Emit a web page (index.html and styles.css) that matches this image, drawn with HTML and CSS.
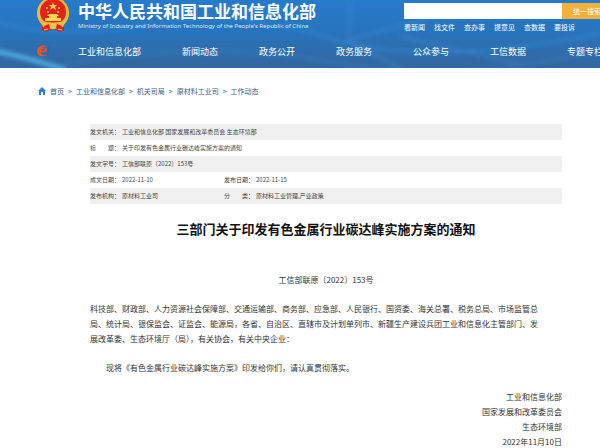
FILE: index.html
```html
<!DOCTYPE html>
<html lang="zh-CN">
<head>
<meta charset="utf-8">
<title>三部门关于印发有色金属行业碳达峰实施方案的通知</title>
<link rel="stylesheet" href="styles.css">
</head>
<body>
<header class="site-header">
  <svg class="backdrop" viewBox="0 0 600 68" preserveAspectRatio="none" aria-hidden="true">
    <defs>
      <linearGradient id="sky" x1="0" y1="0" x2="0" y2="1">
        <stop offset="0" stop-color="#277bcb"/>
        <stop offset=".45" stop-color="#2874bd"/>
        <stop offset="1" stop-color="#34669f"/>
      </linearGradient>
      <filter id="soft" x="-20%" y="-50%" width="140%" height="200%"><feGaussianBlur stdDeviation="2"/></filter>
    </defs>
    <rect width="600" height="68" fill="url(#sky)"/>
    <g fill="none" filter="url(#soft)">
      <path d="M-5 51 Q30 58 65 70" stroke="#55b8ee" stroke-width="4"/>
      <path d="M-5 22 Q60 40 150 24 T330 38 T600 34" stroke="#3186d2" stroke-width="3" opacity=".7"/>
      <path d="M60 66 Q200 38 330 62 T600 50" stroke="#3c83c6" stroke-width="2" opacity=".6"/>
      <path d="M350 0 L348 40 L400 68 M348 40 L460 10 M400 36 L520 64" stroke="#3d8fd9" stroke-width="2" opacity=".6"/>
    </g>
  </svg>
  <div class="masthead">
    <svg class="emblem" viewBox="0 0 34 34" role="img" aria-label="国徽">
      <path d="M6 22 L6 31 Q10 34 13 31 L17 30 L21 31 Q24 34 28 31 L28 22Z" fill="#d9241c"/>
      <circle cx="17" cy="14" r="16" fill="#f2b93b"/>
      <circle cx="17" cy="13" r="13" fill="#e32219"/>
      <path d="M17 3l1 3h3l-2 2 1 3-3-2-3 2 1-3-2-2h3z" fill="#ffd34b"/>
      <g fill="#ffd34b"><circle cx="11" cy="9" r="1"/><circle cx="23" cy="9" r="1"/><circle cx="12" cy="13" r="1"/><circle cx="22" cy="13" r="1"/>
      <path d="M13 15h8l2 2H11zM13 17h8v2h-8zM9 19h16v3H9z"/></g>
      <path d="M4 21 Q17 26 30 21 L27 28 Q17 30 7 28Z" fill="#f2b93b"/>
      <path d="M8 27l5-2 1 4-4 2zM26 27l-5-2-1 4 4 2z" fill="#d9241c"/>
      <circle cx="17" cy="27" r="3" fill="#f6c84f"/>
      <path d="M8 31l4-1M22 30l4 1" stroke="#f6c84f" stroke-width="1"/>
    </svg>
    <div class="brand">
      <div class="brand-cn">中华人民共和国工业和信息化部</div>
      <div class="brand-en">Ministry of Industry and Information Technology of the People's Republic of China</div>
    </div>
    <div class="tools">
      <form class="search">
        <input type="search" aria-label="搜索">
        <button type="button">统一搜索</button>
      </form>
      <div class="quick"><a href="#">看新闻</a><a href="#">找文件</a><a href="#">查办事</a><a href="#">提意见</a><a href="#">查数据</a><a href="#">要投诉</a></div>
    </div>
  </div>
  <nav class="main-nav">
    <svg class="mark" viewBox="0 0 14 12" aria-hidden="true">
      <path d="M10 1C5-1 0 2 0 6.500C0 11 5 13 10 10C6 11 3 9 4 7C8 8 11 6 10 4C9 2 6 2 4 4C5 2 8 1 10 1ZM4 6C5 4 7 3 8 4C8 5 6 6 4 6Z" fill="#e6532c"/>
      <path d="M11 2Q14 4 11 7" fill="none" stroke="#255f9d"/>
    </svg>
    <a href="#">工业和信息化部</a><a href="#">新闻动态</a><a href="#">政务公开</a><a href="#">政务服务</a><a href="#">公众参与</a><a href="#">工信数据</a><a href="#">专题专栏</a>
  </nav>
</header>
<nav class="crumbs">
  <svg viewBox="0 0 8 8" aria-hidden="true"><path d="M4 0L8 4H7V8H5V5H3V8H1V4H0Z" fill="#2f80d0"/></svg>
  <a href="#">首页</a><span>&gt;</span><a href="#">工业和信息化部</a><span>&gt;</span><a href="#">机关司局</a><span>&gt;</span><a href="#">原材料工业司</a><span>&gt;</span><a href="#">工作动态</a>
</nav>
<main>
  <table class="meta">
    <tr><th>发文机关：</th><td colspan="3">工业和信息化部 国家发展和改革委员会 生态环境部</td></tr>
    <tr><th>标　　题：</th><td colspan="3">关于印发有色金属行业碳达峰实施方案的通知</td></tr>
    <tr><th>发文字号：</th><td colspan="3">工信部联原〔2022〕153号</td></tr>
    <tr><th>成文日期：</th><td class="half">2022-11-10</td><th>发布日期：</th><td>2022-11-15</td></tr>
    <tr><th>发布机构：</th><td class="half">原材料工业司</td><th>分　　类：</th><td>原材料工业管理,产业政策</td></tr>
  </table>
  <h1>三部门关于印发有色金属行业碳达峰实施方案的通知</h1>
  <article>
    <p class="number">工信部联原〔2022〕153号</p>
    <p>科技部、财政部、人力资源社会保障部、交通运输部、商务部、应急部、人民银行、国资委、海关总署、税务总局、市场监管总<br>局、统计局、银保监会、证监会、能源局，各省、自治区、直辖市及计划单列市、新疆生产建设兵团工业和信息化主管部门、发<br>展改革委、生态环境厅（局），有关协会，有关中央企业：</p>
    <p class="indent">现将《有色金属行业碳达峰实施方案》印发给你们，请认真贯彻落实。</p>
    <p class="sign">工业和信息化部<br>国家发展和改革委员会<br>生态环境部<br>2022年11月10日</p>
  </article>
</main>
</body>
</html>
```
FILE: styles.css
```css
* { box-sizing: border-box; }
body {
  margin: 0;
  background: #fff;
  color: #333;
  font-family: "Noto Sans CJK SC", sans-serif;
  overflow: hidden;
}
a { color: inherit; text-decoration: none; white-space: nowrap; }

.site-header {
  position: relative;
  color: #fff;
}
.backdrop {
  position: absolute;
  inset: 0;
  width: 100%;
  height: 100%;
  z-index: -1;
}
.masthead { display: flex; height: 36px; padding-left: 36px; }
.emblem { flex: none; width: 34px; height: 34px; margin-right: 8px; margin-top: -1px; }
.brand { flex: 1; white-space: nowrap; }
.brand-cn { font-size: 17px; font-weight: 700; line-height: 22px; }
.brand-en { font-family: "Noto Sans", sans-serif; font-size: 6px; line-height: 8px; color: #dbeaf8; }
.tools { flex: none; width: 196px; padding-top: 3px; }
.search { display: flex; height: 16px; }
.search input {
  flex: none;
  width: 158px;
  border: 0;
  padding: 0 4px;
  background: #fff;
  font: inherit;
  font-size: 7px;
}
.search button {
  flex: none;
  width: 50px;
  border: 0;
  padding: 0;
  background: #f3b03f;
  color: #fff;
  font: inherit;
  font-size: 7px;
}
.quick { display: flex; gap: 9px; font-size: 7px; line-height: 17px; }

.main-nav {
  display: flex;
  align-items: center;
  height: 32px;
  padding: 0 0 2px 37px;
  gap: 41px;
  font-size: 9px;
}
.mark { flex: none; width: 14px; height: 12px; margin-right: -14px; }

.crumbs {
  display: flex;
  align-items: center;
  height: 45px;
  margin-top: 4px;
  padding: 0 38px 9px;
  border-top: 1px solid #f3f5f8;
  gap: 4px;
  color: #35628d;
  font-size: 7px;
}
.crumbs svg { width: 8px; height: 8px; }

main { margin: 7px 38px 0 90px; }
.meta {
  width: 100%;
  border-collapse: collapse;
  font-size: 6px;
  line-height: 16px;
  color: #444;
}
.meta tr:nth-child(odd) { background: #f0f0f0; }
.meta th, .meta td { padding: 0; font-weight: 400; text-align: left; white-space: nowrap; }
.meta th { width: 32px; }
.meta .half { width: 102px; }

h1 {
  margin: 15px 0 0;
  color: #111;
  font-size: 13px;
  font-weight: 700;
  line-height: 20px;
  text-align: center;
}
article { margin-top: 33px; font-size: 8px; line-height: 15px; }
article p { margin: 0 0 14px; white-space: nowrap; }
.number { text-align: center; }
.indent { text-indent: 2em; }
.sign { text-align: right; }
```
